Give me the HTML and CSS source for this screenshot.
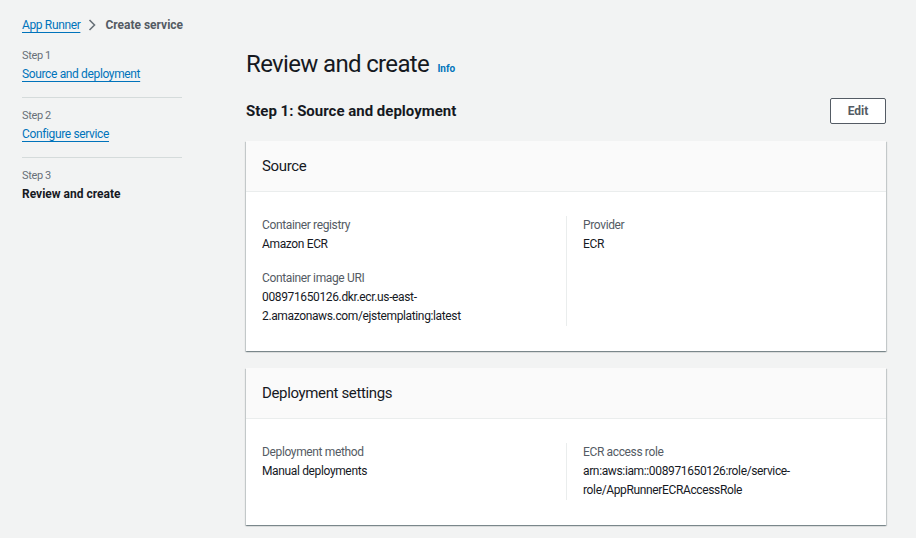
FILE: index.html
```html
<!DOCTYPE html>
<html>
<head>
<meta charset="utf-8">
<link rel="stylesheet" href="styles.css">
</head>
<body>
<div class="page">
  <nav class="breadcrumb">
    <a class="crumb-link" href="#">App Runner</a>
    <svg class="chev" width="10" height="12" viewBox="0 0 10 12"><path d="M2.5 1 L7.5 6 L2.5 11" fill="none" stroke="#687078" stroke-width="1.6"/></svg>
    <span class="crumb-current">Create service</span>
  </nav>
  <div class="layout">
    <aside class="steps">
      <div class="step">
        <div class="step-num">Step 1</div>
        <a class="step-link" href="#">Source and deployment</a>
      </div>
      <div class="step">
        <div class="step-num">Step 2</div>
        <a class="step-link" href="#">Configure service</a>
      </div>
      <div class="step last">
        <div class="step-num">Step 3</div>
        <div class="step-current">Review and create</div>
      </div>
    </aside>
    <main class="main">
      <h1 class="title">Review and create <a class="info" href="#">Info</a></h1>
      <div class="section-head">
        <h2 class="section-title">Step 1: Source and deployment</h2>
        <button class="btn">Edit</button>
      </div>
      <section class="card">
        <div class="card-head">Source</div>
        <div class="card-body">
          <div class="col">
            <div class="kv">
              <div class="k">Container registry</div>
              <div class="v">Amazon ECR</div>
            </div>
            <div class="kv">
              <div class="k">Container image URI</div>
              <div class="v">008971650126.dkr.ecr.us-east-<br>2.amazonaws.com/ejstemplating:latest</div>
            </div>
          </div>
          <div class="col divided">
            <div class="kv">
              <div class="k">Provider</div>
              <div class="v">ECR</div>
            </div>
          </div>
        </div>
      </section>
      <section class="card">
        <div class="card-head">Deployment settings</div>
        <div class="card-body">
          <div class="col">
            <div class="kv">
              <div class="k">Deployment method</div>
              <div class="v">Manual deployments</div>
            </div>
          </div>
          <div class="col divided">
            <div class="kv">
              <div class="k">ECR access role</div>
              <div class="v">arn:aws:iam::008971650126:role/service-<br>role/AppRunnerECRAccessRole</div>
            </div>
          </div>
        </div>
      </section>
    </main>
  </div>
</div>
</body>
</html>
```
FILE: styles.css
```css
* { box-sizing: border-box; }
html, body { margin: 0; padding: 0; }
body {
  background: #f2f3f3;
  font-family: Roboto, "Noto Sans", sans-serif;
  font-size: 12px;
  line-height: 19px;
  letter-spacing: -0.03em;
  color: #16191f;
  width: 916px;
  height: 538px;
  overflow: hidden;
}
a { color: #0073bb; }
.page { padding: 15px 30px 0 22px; }
.breadcrumb {
  display: flex;
  align-items: center;
  height: 20px;
}
.crumb-link {
  text-decoration: underline;
  text-underline-offset: 3px;
}
.chev { margin: 0 8px 0 7px; }
.crumb-current { color: #545b64; font-weight: bold; letter-spacing: 0; }

.layout { display: flex; gap: 64px; margin-top: 11px; }
.steps { width: 160px; flex: none; }
.step {
  border-bottom: 1px solid #d5dbdb;
  padding: 1px 0 14px;
  margin-bottom: 8px;
}
.step.last { border-bottom: none; }
.step-num { font-size: 11px; line-height: 18px; color: #687078; }
.step-link {
  display: block;
  width: fit-content;
  line-height: 18px;
  text-decoration: underline;
  text-underline-offset: 3px;
}
.step-current { font-weight: bold; line-height: 18px; letter-spacing: 0; }

.main { width: 640px; flex: none; }
.title {
  margin: 3px 0 0;
  font-size: 24px;
  line-height: 30px;
  font-weight: normal;
  letter-spacing: -0.65px;
}
.info {
  font-size: 10px;
  font-weight: bold;
  text-decoration: none;
  letter-spacing: 0;
  margin-left: 3px;
}
.section-head {
  display: flex;
  justify-content: space-between;
  align-items: center;
  margin-top: 14px;
}
.section-title {
  margin: 0;
  font-size: 15px;
  line-height: 20px;
  font-weight: bold;
  letter-spacing: 0;
}
.btn {
  width: 56px;
  height: 26px;
  border: 1px solid #545b64;
  border-radius: 2px;
  background: #fff;
  color: #545b64;
  font-family: inherit;
  font-size: 12px;
  font-weight: bold;
  letter-spacing: 0;
  padding: 0;
}
.card {
  background: #fff;
  margin-top: 17px;
  box-shadow: 0 1px 1px 0 rgba(0,28,36,.3), 1px 1px 1px 0 rgba(0,28,36,.15), -1px 1px 1px 0 rgba(0,28,36,.15);
}
.card-head {
  background: #fafafa;
  border-bottom: 1px solid #eaeded;
  padding: 16px 16px 15px;
  font-size: 15px;
  line-height: 19px;
}
.card-body {
  display: grid;
  grid-template-columns: 1fr 1fr;
  padding: 24px 16px 25px;
}
.col { display: flex; flex-direction: column; gap: 15px; }
.col.divided { border-left: 1px solid #eaeded; padding-left: 16px; }
.k { color: #545b64; }
.v { color: #16191f; }
```
